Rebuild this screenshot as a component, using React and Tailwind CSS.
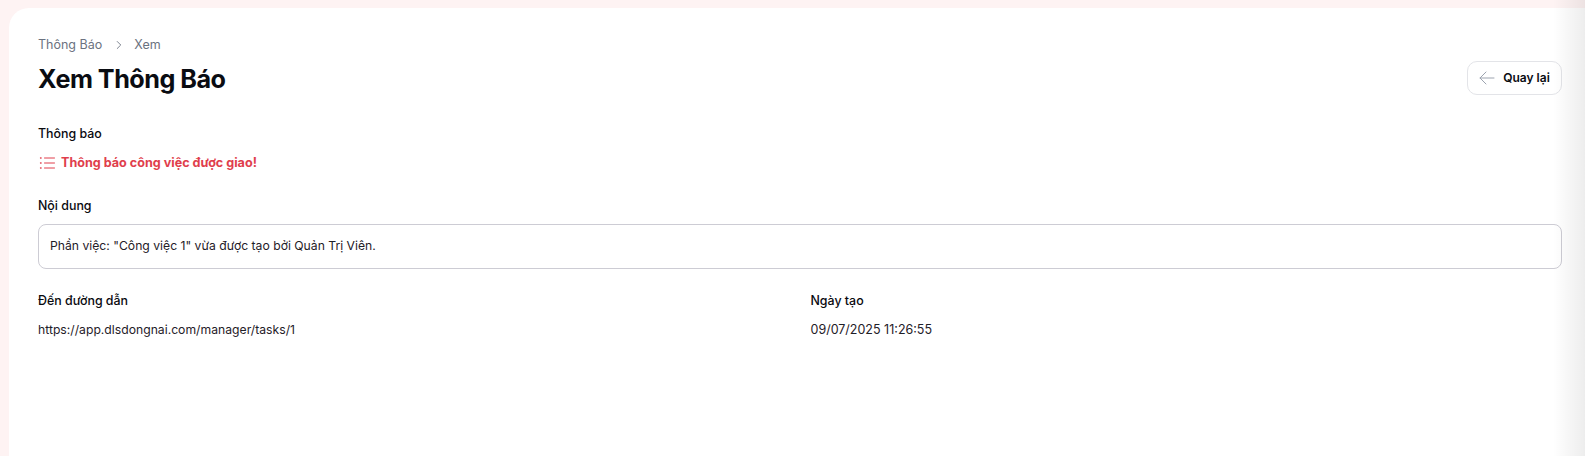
import React from 'react'
import { ChevronRight } from 'lucide-react'

function ListIcon() {
  return (
    <svg width="16" height="16" viewBox="0 0 16 16" fill="none" stroke="currentColor" strokeWidth="1" strokeLinecap="round" className="shrink-0">
      <path d="M5.5 3h10M5.5 8h10M5.5 13h10" />
      <path d="M1.5 3h1.5M1.5 8h1.5M1.5 13h1.5" strokeWidth="1.3" strokeDasharray="0.6 0.9" />
    </svg>
  )
}

function ArrowLeftIcon() {
  return (
    <svg width="16" height="16" viewBox="0 0 16 16" fill="none" stroke="currentColor" strokeWidth="1" strokeLinecap="round" strokeLinejoin="round" className="shrink-0 text-[#9ca3af]">
      <path d="M15 8H1M7 2 1 8l6 6" />
    </svg>
  )
}

export default function App() {
  return (
    <div className="relative h-[456px] w-[1585px] overflow-hidden bg-[#fef3f3] pl-[9px] pt-2 font-['Inter',sans-serif] text-[#0a0a0f]">
      <main className="h-full rounded-tl-[20px] bg-white pl-[29px] pr-[23px] pt-[29px]">
        <header className="flex items-start justify-between">
          <div>
            <nav className="flex h-4 items-center text-[12.5px] leading-4 text-[#6b7280]">
              <span>Thông Báo</span>
              <ChevronRight size={14} strokeWidth={1.5} className="ml-[10px] mr-[8px] text-[#6b7280]" />
              <span>Xem</span>
            </nav>
            <h1 className="mt-[10px] text-[25.2px] font-bold leading-8 tracking-[-0.5px] text-[#0a0c12]">Xem Thông Báo</h1>
          </div>
          <button className="mt-[24px] flex h-[34px] w-[95px] items-center justify-center gap-2 rounded-[10px] border border-[#e3e4e8] bg-white text-[12px] font-semibold">
            <ArrowLeftIcon />
            <span className="text-[#0a0c12]">Quay lại</span>
          </button>
        </header>

        <section className="mt-[29px]">
          <p className="text-[12.4px] font-[450] leading-5">Thông báo</p>
          <div className="mt-[9px] flex h-5 items-center gap-[6px] pl-px text-[12.6px] font-bold text-[#e03e4c]">
            <ListIcon />
            <span>Thông báo công việc được giao!</span>
          </div>
        </section>

        <section className="mt-[23px]">
          <p className="text-[12.4px] font-[450] leading-5">Nội dung</p>
          <div className="mt-[8px] flex h-[45px] items-center rounded-lg border border-[#cdccd4] px-[11px] text-[12.2px] text-[#1f2028]">
            Phần việc: "Công việc 1" vừa được tạo bởi Quản Trị Viên.
          </div>
        </section>

        <section className="mt-[22px] grid grid-cols-2 gap-x-[21px]">
          <div>
            <p className="text-[12.4px] font-[450] leading-5">Đến đường dẫn</p>
            <p className="mt-[9px] text-[12.2px] leading-5 text-[#1f2028]">https://app.dlsdongnai.com/manager/tasks/1</p>
          </div>
          <div>
            <p className="text-[12.4px] font-[450] leading-5">Ngày tạo</p>
            <p className="mt-[9px] text-[12.5px] leading-5 text-[#1f2028]">09/07/2025 11:26:55</p>
          </div>
        </section>
      </main>
      <div className="pointer-events-none absolute inset-y-0 right-0 w-[32px] bg-gradient-to-r from-transparent to-black/[0.07]" />
    </div>
  )
}
